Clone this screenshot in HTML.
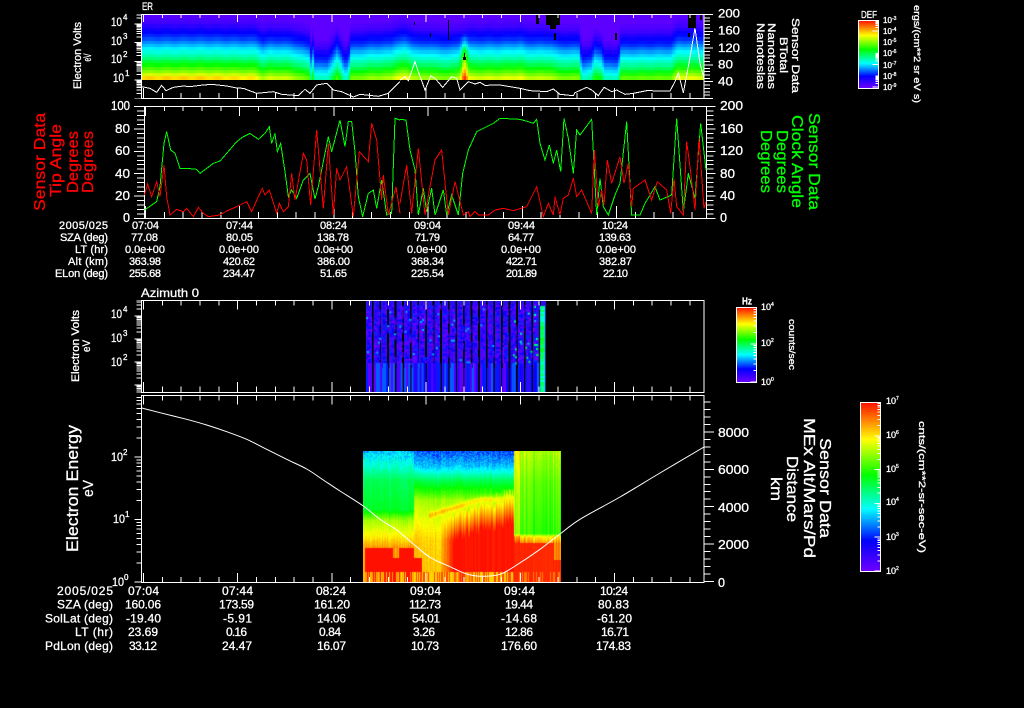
<!DOCTYPE html>
<html lang="en">
<head>
<meta charset="utf-8">
<title>Mars Express sensor data plot</title>
<style>
html,body{margin:0;padding:0;background:#000;width:1024px;height:708px;overflow:hidden}
#root{position:relative;width:1024px;height:708px;background:#000}
canvas{position:absolute;display:block}
svg{position:absolute;left:0;top:0}
text{font-family:"Liberation Sans",sans-serif;fill:#fff;stroke:#fff;stroke-width:.3}
.t{font-size:11px}
.u{font-size:12px}
.n{font-size:13px}
.s{font-size:8px}
.r text{fill:#ff0000;stroke:#ff0000;font-size:16px}
.g text{fill:#00ff00;stroke:#00ff00;font-size:16px}
.big text{font-size:16px}
.fr{fill:none;stroke:#fff;stroke-width:1;shape-rendering:crispEdges}
.tk line{stroke:#fff;shape-rendering:crispEdges}
.pl{fill:none;stroke-width:3;stroke-linejoin:miter;shape-rendering:crispEdges}
</style>
</head>
<body>
<div id="root">
<canvas id="c1" width="562" height="65" style="left:142px;top:15px;background:linear-gradient(#5800f4 0,#0000ff 25%,#00ffff 53%,#00ff00 77%,#ffff00 95%,#ff9000 100%)"></canvas>
<canvas id="c3" width="180" height="91" style="left:366px;top:301px;background:repeating-linear-gradient(90deg,#2a10e8 0,#2a10e8 5.8px,#000 5.8px,#000 7.6px)"></canvas>
<canvas id="c4" width="198" height="131" style="left:363px;top:451px;background:linear-gradient(#00c0ff 0,#00ff60 25%,#40ff00 45%,#ffff00 65%,#ff8000 75%,#ff1000 100%)"></canvas>

<svg width="1024" height="708" viewBox="0 0 1024 708" xmlns="http://www.w3.org/2000/svg">
<defs>
<linearGradient id="rb" x1="0" y1="0" x2="0" y2="1">
<stop offset="0" stop-color="#ff1000"/><stop offset=".22" stop-color="#ffff00"/><stop offset=".43" stop-color="#00ff00"/><stop offset=".63" stop-color="#00ffff"/><stop offset=".82" stop-color="#0000ff"/><stop offset="1" stop-color="#7000ff"/>
</linearGradient>
<path id="lg" fill="none" stroke="#fff" vector-effect="non-scaling-stroke" shape-rendering="crispEdges" d="M-7 0H0M-5 -.301H0M-5 -.477H0M-5 -.602H0M-5 -.699H0M-5 -.778H0M-5 -.845H0M-5 -.903H0M-5 -.954H0"/>
<path id="lc" fill="none" stroke="#fff" vector-effect="non-scaling-stroke" shape-rendering="crispEdges" d="M-6 0H0M-3 -.301H0M-3 -.477H0M-3 -.602H0M-3 -.699H0M-3 -.778H0M-3 -.845H0M-3 -.903H0M-3 -.954H0"/>
<clipPath id="k1"><rect x="130" y="14" width="20" height="85"/></clipPath>
<clipPath id="k3"><rect x="130" y="300" width="20" height="93"/></clipPath>
<clipPath id="k4"><rect x="130" y="395" width="20" height="188"/></clipPath>
<clipPath id="b1"><rect x="858" y="20" width="21" height="69"/></clipPath>
<clipPath id="b2"><rect x="736" y="307" width="21" height="76"/></clipPath>
<clipPath id="b3"><rect x="860" y="402" width="21" height="170"/></clipPath>
</defs>

<!-- black gaps in top spectrogram -->
<g fill="#000" shape-rendering="crispEdges">
<rect x="536" y="15" width="3" height="9"/><rect x="546" y="15" width="14" height="10"/><rect x="550" y="25" width="6" height="4"/><rect x="554" y="33" width="2" height="7"/><rect x="615" y="33" width="2" height="7"/><rect x="688" y="15" width="8" height="13"/><rect x="688" y="33" width="2" height="4"/><rect x="700" y="15" width="2" height="5"/><rect x="414" y="22" width="1" height="3"/><rect x="448" y="20" width="1" height="20"/><rect x="430" y="33" width="1" height="4"/><rect x="463" y="57" width="3" height="3"/><rect x="464" y="53" width="1" height="4"/>
</g>

<!-- frames -->
<rect class="fr" x="141.5" y="14.5" width="562.5" height="84"/>
<rect class="fr" x="144.5" y="106.5" width="562" height="112"/>
<rect class="fr" x="141.5" y="300.5" width="562.5" height="92"/>
<rect class="fr" x="141.5" y="395.5" width="562.5" height="187"/>

<!-- time ticks -->
<g class="tk">
<line x1="143" x2="704" y1="16" y2="16" stroke-width="4" stroke-dasharray="1 17.84"/>
<line x1="143" x2="704" y1="18" y2="18" stroke-width="8" stroke-dasharray="1 93.2"/>
<line x1="143" x2="704" y1="95.5" y2="95.5" stroke-width="5" stroke-dasharray="1 17.84"/>
<line x1="143" x2="704" y1="93" y2="93" stroke-width="10" stroke-dasharray="1 93.2"/>
<line x1="145" x2="706" y1="108.5" y2="108.5" stroke-width="5" stroke-dasharray="1 17.84"/>
<line x1="145" x2="706" y1="111" y2="111" stroke-width="10" stroke-dasharray="1 93.2"/>
<line x1="145" x2="706" y1="215" y2="215" stroke-width="6" stroke-dasharray="1 17.84"/>
<line x1="145" x2="706" y1="212" y2="212" stroke-width="12" stroke-dasharray="1 93.2"/>
<line x1="143" x2="704" y1="303" y2="303" stroke-width="5" stroke-dasharray="1 17.84"/>
<line x1="143" x2="704" y1="305" y2="305" stroke-width="9" stroke-dasharray="1 93.2"/>
<line x1="143" x2="704" y1="389.5" y2="389.5" stroke-width="6" stroke-dasharray="1 17.84"/>
<line x1="143" x2="704" y1="387" y2="387" stroke-width="10" stroke-dasharray="1 93.2"/>
<line x1="143" x2="704" y1="398" y2="398" stroke-width="5" stroke-dasharray="1 17.84"/>
<line x1="143" x2="704" y1="400" y2="400" stroke-width="9" stroke-dasharray="1 93.2"/>
<line x1="143" x2="704" y1="579.5" y2="579.5" stroke-width="5" stroke-dasharray="1 17.84"/>
<line x1="143" x2="704" y1="577.5" y2="577.5" stroke-width="9" stroke-dasharray="1 93.2"/>
<!-- value ticks -->
<line x1="140.5" x2="140.5" y1="106" y2="219" stroke-width="7" stroke-dasharray="1 3.48"/>
<line x1="139" x2="139" y1="106" y2="219" stroke-width="10" stroke-dasharray="1 21.4"/>
<line x1="707" x2="707" y1="14" y2="99" stroke-width="6" stroke-dasharray="1 2.36"/>
<line x1="708.5" x2="708.5" y1="14" y2="99" stroke-width="9" stroke-dasharray="1 15.8"/>
<line x1="710" x2="710" y1="106" y2="219" stroke-width="7" stroke-dasharray="1 3.48"/>
<line x1="711" x2="711" y1="106" y2="219" stroke-width="9" stroke-dasharray="1 21.4"/>
<line x1="707.5" x2="707.5" y1="582" y2="395" stroke-width="6" stroke-dasharray="1 6.48"/>
<line x1="709" x2="709" y1="582" y2="395" stroke-width="10" stroke-dasharray="1 36.4"/>
</g>

<!-- log ticks -->
<g clip-path="url(#k1)">
<use href="#lg" transform="translate(141.5,99) scale(1,18.8)"/><use href="#lg" transform="translate(141.5,80.2) scale(1,18.8)"/><use href="#lg" transform="translate(141.5,61.4) scale(1,18.8)"/><use href="#lg" transform="translate(141.5,42.6) scale(1,18.8)"/><use href="#lg" transform="translate(141.5,23.8) scale(1,18.8)"/>
</g>
<g clip-path="url(#k3)">
<use href="#lg" transform="translate(141.5,408) scale(1,23)"/><use href="#lg" transform="translate(141.5,385) scale(1,23)"/><use href="#lg" transform="translate(141.5,362) scale(1,23)"/><use href="#lg" transform="translate(141.5,339) scale(1,23)"/><use href="#lg" transform="translate(141.5,316) scale(1,23)"/>
</g>
<g clip-path="url(#k4)">
<use href="#lg" transform="translate(141.5,582) scale(1,62.5)"/><use href="#lg" transform="translate(141.5,519.5) scale(1,62.5)"/><use href="#lg" transform="translate(141.5,457) scale(1,62.5)"/>
</g>

<!-- data lines -->
<g transform="translate(60,0) scale(.33333)" class="pl" stroke="#fff"><polyline points="245,260 270,265 290,277 305,256 318,272 340,262 370,258 390,260 420,256 455,253 500,258 530,264 550,265 590,280 610,278 640,275 665,283 715,287 735,268 750,280 770,255 800,250 820,270 845,275 880,291 900,283 955,289 985,280 1020,245"/></g>
<g transform="translate(400,0) scale(.33333)" class="pl" stroke="#fff"><polyline points="0,240 15,230 25,242 45,185 55,215 75,270 92,228 105,235 128,262 155,230 170,235 180,270 205,245 225,252 240,247 255,256 300,255 360,265 390,272 440,275 460,267 480,283 520,287 525,278 560,262 575,270 595,287 612,262 635,275 650,270 675,283 700,280 740,272 810,273 825,245 835,218 850,278 865,200 885,85 900,190 912,235"/></g>

<g transform="translate(20,100) scale(.33333)" class="pl">
<polyline stroke="#00ff00" points="373,330 385,322 410,305 420,260 432,130 440,95 452,150 465,160 480,205 500,205 530,208 540,220 560,205 580,190 600,183 620,160 650,125 670,110 690,100 715,118 735,100 748,80 755,130 765,100 772,155 782,130 795,215 805,290 815,270 830,295 850,240 870,220 885,297 895,260 925,110 935,155 960,60 975,140 985,65 995,65 1005,155 1015,290 1028,350 1045,280 1060,270 1070,325 1085,240 1100,345 1115,340 1125,55 1140,60"/>
<polyline stroke="#ff0000" points="373,285 383,252 395,290 410,245 420,290 432,195 440,290 450,345 470,328 490,335 500,325 520,350 535,322 550,340 565,350 600,345 620,333 650,320 680,305 695,335 715,290 727,265 735,285 748,270 770,340 778,310 790,335 805,320 815,220 825,300 850,160 860,180 872,315 890,90 910,325 925,130 940,345 950,205 960,240 980,200 1000,350 1018,155 1045,185 1055,70 1070,120 1085,300 1090,225 1105,345 1128,260 1140,340"/>
</g>
<g transform="translate(400,100) scale(.33333)" class="pl">
<polyline stroke="#00ff00" points="0,58 18,60 30,150 45,210 55,345 70,265 80,335 95,265 105,345 130,270 140,345 155,285 175,345 188,220 205,150 230,95 250,85 280,70 300,55 360,58 385,65 400,70 410,58 420,130 435,180 448,135 460,190 470,150 482,215 492,55 505,115 520,220 530,90 540,105 575,58 590,345 600,235 610,320 625,345 645,285 660,250 680,65 695,345 720,345 735,310 765,260 780,300 815,285 830,55 850,335 865,220 885,295 902,70 918,210"/>
<polyline stroke="#ff0000" points="0,310 20,195 35,340 55,145 75,345 90,260 105,180 125,150 145,345 165,245 190,345 205,335 210,350 225,335 235,345 265,345 285,330 310,325 340,332 380,320 410,260 430,350 445,310 460,345 465,290 480,345 490,295 505,285 520,235 530,290 545,270 575,340 583,150 595,320 605,270 612,315 622,180 635,250 660,170 672,250 685,190 695,320 700,265 735,240 755,300 772,245 800,270 812,340 822,235 830,320 850,345 860,125 870,200 885,330 897,115 912,325 918,305"/>
</g>

<!-- altitude line -->
<path id="alt" fill="none" stroke="#fff" d="M141.7,408 L160,412.7 186.7,419.3 206.7,425 226.7,431.7 246.7,439.3 266.7,449.3 286.7,459.3 306.7,469 323.3,480 340,491 363.3,506 380,519.3 396.7,530 413.3,544 430,557.3 450,566.7 466.7,574 481.7,576.3 500,574.3 516.7,565 540,549.3 560,534 580,519.3 620,497 660,473 704,447"/>

<!-- color bars -->
<rect x="858.5" y="20.5" width="20" height="68" fill="url(#rb)" stroke="#fff" shape-rendering="crispEdges"/>
<rect x="736.5" y="307.5" width="20" height="75" fill="url(#rb)" stroke="#fff" shape-rendering="crispEdges"/>
<rect x="860.5" y="402.5" width="20" height="169" fill="url(#rb)" stroke="#fff" shape-rendering="crispEdges"/>
<g clip-path="url(#b1)">
<use href="#lc" transform="translate(878.5,87) scale(1,11.3)"/><use href="#lc" transform="translate(878.5,64.4) scale(1,11.3)"/><use href="#lc" transform="translate(878.5,31) scale(1,11.3)"/>
</g>
<g clip-path="url(#b2)">
<use href="#lc" transform="translate(756.5,382) scale(1,38)"/><use href="#lc" transform="translate(756.5,344) scale(1,38)"/>
</g>
<g clip-path="url(#b3)">
<use href="#lc" transform="translate(880.5,571) scale(1,33.8)"/><use href="#lc" transform="translate(880.5,537.2) scale(1,33.8)"/><use href="#lc" transform="translate(880.5,503.4) scale(1,33.8)"/><use href="#lc" transform="translate(880.5,469.6) scale(1,33.8)"/><use href="#lc" transform="translate(880.5,435.8) scale(1,33.8)"/>
</g>

<!-- panel 1 labels -->
<text class="t" x="142" y="10" textLength="11" lengthAdjust="spacingAndGlyphs">ER</text>
<text class="t" transform="translate(81,55.5) rotate(-90)" text-anchor="middle" textLength="67" lengthAdjust="spacingAndGlyphs">Electron Volts</text>
<text class="t" transform="translate(91,57.5) rotate(-90)" text-anchor="middle" textLength="8" lengthAdjust="spacingAndGlyphs">eV</text>
<g class="u">
<text x="111" y="26" textLength="11" lengthAdjust="spacingAndGlyphs">10</text><text class="s" x="123" y="20">4</text>
<text x="111" y="45" textLength="11" lengthAdjust="spacingAndGlyphs">10</text><text class="s" x="123" y="39">3</text>
<text x="111" y="63" textLength="11" lengthAdjust="spacingAndGlyphs">10</text><text class="s" x="123" y="57">2</text>
<text x="113" y="82" textLength="11" lengthAdjust="spacingAndGlyphs">10</text><text class="s" x="125" y="76">1</text>
</g>
<g class="u">
<text x="718" y="17.5" textLength="22" lengthAdjust="spacingAndGlyphs">200</text>
<text x="718" y="34.5" textLength="22" lengthAdjust="spacingAndGlyphs">160</text>
<text x="718" y="52" textLength="22" lengthAdjust="spacingAndGlyphs">120</text>
<text x="718" y="68.5" textLength="15" lengthAdjust="spacingAndGlyphs">80</text>
<text x="718" y="85.5" textLength="15" lengthAdjust="spacingAndGlyphs">40</text>
</g>
<g class="t">
<text transform="translate(792,55.5) rotate(90)" text-anchor="middle" textLength="75" lengthAdjust="spacingAndGlyphs">Sensor Data</text>
<text transform="translate(780,55) rotate(90)" text-anchor="middle" textLength="36" lengthAdjust="spacingAndGlyphs">BTotal</text>
<text transform="translate(768,56) rotate(90)" text-anchor="middle" textLength="66" lengthAdjust="spacingAndGlyphs">Nanoteslas</text>
<text transform="translate(757,56) rotate(90)" text-anchor="middle" textLength="66" lengthAdjust="spacingAndGlyphs">Nanoteslas</text>
</g>
<text class="t" x="861" y="18" textLength="16" lengthAdjust="spacingAndGlyphs" style="font-size:10px">DEF</text>
<g style="font-size:8px">
<text x="883" y="23">10</text><text x="892" y="20" style="font-size:5px">-3</text>
<text x="883" y="34">10</text><text x="892" y="31" style="font-size:5px">-4</text>
<text x="883" y="45">10</text><text x="892" y="42" style="font-size:5px">-5</text>
<text x="883" y="56">10</text><text x="892" y="53" style="font-size:5px">-6</text>
<text x="883" y="68">10</text><text x="892" y="65" style="font-size:5px">-7</text>
<text x="883" y="79">10</text><text x="892" y="76" style="font-size:5px">-8</text>
<text x="883" y="90">10</text><text x="892" y="87" style="font-size:5px">-9</text>
</g>
<text transform="translate(914,54) rotate(90)" text-anchor="middle" textLength="98" lengthAdjust="spacingAndGlyphs" style="font-size:9px">ergs/(cm**2 sr eV s)</text>

<!-- panel 2 labels -->
<g class="n">
<text x="111" y="110" textLength="19" lengthAdjust="spacingAndGlyphs">100</text>
<text x="115" y="133" textLength="15" lengthAdjust="spacingAndGlyphs">80</text>
<text x="115" y="155" textLength="15" lengthAdjust="spacingAndGlyphs">60</text>
<text x="115" y="178" textLength="15" lengthAdjust="spacingAndGlyphs">40</text>
<text x="115" y="200" textLength="15" lengthAdjust="spacingAndGlyphs">20</text>
<text x="123" y="222" textLength="7" lengthAdjust="spacingAndGlyphs">0</text>
<text x="720" y="110" textLength="23" lengthAdjust="spacingAndGlyphs">200</text>
<text x="720" y="133" textLength="23" lengthAdjust="spacingAndGlyphs">160</text>
<text x="720" y="155" textLength="23" lengthAdjust="spacingAndGlyphs">120</text>
<text x="720" y="178" textLength="15" lengthAdjust="spacingAndGlyphs">80</text>
<text x="720" y="200" textLength="15" lengthAdjust="spacingAndGlyphs">40</text>
<text x="720" y="222" textLength="7" lengthAdjust="spacingAndGlyphs">0</text>
</g>
<g class="r">
<text transform="translate(45,162) rotate(-90)" text-anchor="middle" textLength="98" lengthAdjust="spacingAndGlyphs">Sensor Data</text>
<text transform="translate(61,160.5) rotate(-90)" text-anchor="middle" textLength="73" lengthAdjust="spacingAndGlyphs">Tip Angle</text>
<text transform="translate(78,162) rotate(-90)" text-anchor="middle" textLength="62" lengthAdjust="spacingAndGlyphs">Degrees</text>
<text transform="translate(93,162) rotate(-90)" text-anchor="middle" textLength="62" lengthAdjust="spacingAndGlyphs">Degrees</text>
</g>
<g class="g">
<text transform="translate(809,161.5) rotate(90)" text-anchor="middle" textLength="97" lengthAdjust="spacingAndGlyphs">Sensor Data</text>
<text transform="translate(792,161.5) rotate(90)" text-anchor="middle" textLength="93" lengthAdjust="spacingAndGlyphs">Clock Angle</text>
<text transform="translate(777,161.5) rotate(90)" text-anchor="middle" textLength="63" lengthAdjust="spacingAndGlyphs">Degrees</text>
<text transform="translate(761,161.5) rotate(90)" text-anchor="middle" textLength="63" lengthAdjust="spacingAndGlyphs">Degrees</text>
</g>

<!-- table 1 -->
<g class="t">
<text x="59" y="229" textLength="49">2005/025</text>
<text x="60" y="241" textLength="48">SZA (deg)</text>
<text x="75" y="253" textLength="33">LT (hr)</text>
<text x="68" y="265" textLength="40">Alt (km)</text>
<text x="55" y="277" textLength="53">ELon (deg)</text>
<text x="132" y="229" textLength="27">07:04</text><text x="131" y="241" textLength="27">77.08</text><text x="125" y="253" textLength="40">0.0e+00</text><text x="129" y="265" textLength="32">363.98</text><text x="129" y="277" textLength="32">255.68</text>
<text x="226" y="229" textLength="27">07:44</text><text x="226" y="241" textLength="27">80.05</text><text x="219" y="253" textLength="40">0.0e+00</text><text x="223" y="265" textLength="32">420.62</text><text x="223" y="277" textLength="32">234.47</text>
<text x="320" y="229" textLength="27">08:24</text><text x="317" y="241" textLength="32">138.78</text><text x="314" y="253" textLength="39">0.0e+00</text><text x="317" y="265" textLength="33">386.00</text><text x="320" y="277" textLength="27">51.65</text>
<text x="414" y="229" textLength="27">09:04</text><text x="415" y="241" textLength="25">71.79</text><text x="407" y="253" textLength="40">0.0e+00</text><text x="411" y="265" textLength="33">368.34</text><text x="411" y="277" textLength="33">225.54</text>
<text x="508" y="229" textLength="27">09:44</text><text x="508" y="241" textLength="26">64.77</text><text x="501" y="253" textLength="40">0.0e+00</text><text x="506" y="265" textLength="31">422.71</text><text x="506" y="277" textLength="31">201.89</text>
<text x="602" y="229" textLength="26">10:24</text><text x="599" y="241" textLength="32">139.63</text><text x="596" y="253" textLength="40">0.0e+00</text><text x="599" y="265" textLength="33">382.87</text><text x="603" y="277" textLength="25">22.10</text>
</g>

<!-- panel 3 labels -->
<text class="u" x="141" y="297" textLength="58" lengthAdjust="spacingAndGlyphs">Azimuth 0</text>
<text class="t" transform="translate(79,346) rotate(-90)" text-anchor="middle" textLength="72" lengthAdjust="spacingAndGlyphs">Electron Volts</text>
<text class="t" transform="translate(90,346) rotate(-90)" text-anchor="middle" textLength="12" lengthAdjust="spacingAndGlyphs">eV</text>
<g class="u">
<text x="111" y="318" textLength="11" lengthAdjust="spacingAndGlyphs">10</text><text class="s" x="123" y="312">4</text>
<text x="111" y="342" textLength="11" lengthAdjust="spacingAndGlyphs">10</text><text class="s" x="123" y="336">3</text>
<text x="111" y="366" textLength="11" lengthAdjust="spacingAndGlyphs">10</text><text class="s" x="123" y="360">2</text>
</g>
<text x="742" y="304.5" textLength="10" lengthAdjust="spacingAndGlyphs" style="font-size:10px;font-weight:bold">Hz</text>
<g style="font-size:9px">
<text x="761" y="310">10</text><text x="771" y="306" style="font-size:5px">4</text>
<text x="761" y="346">10</text><text x="771" y="342" style="font-size:5px">2</text>
<text x="761" y="385">10</text><text x="771" y="381" style="font-size:5px">0</text>
</g>
<text transform="translate(789,344.5) rotate(90)" text-anchor="middle" textLength="51" lengthAdjust="spacingAndGlyphs" style="font-size:9px">counts/sec</text>

<!-- panel 4 labels -->
<g style="font-size:17px">
<text transform="translate(78,488.5) rotate(-90)" text-anchor="middle" textLength="127" lengthAdjust="spacingAndGlyphs">Electron Energy</text>
<text transform="translate(93,488.5) rotate(-90)" text-anchor="middle" textLength="17" lengthAdjust="spacingAndGlyphs" style="font-size:15px">eV</text>
</g>
<g class="u">
<text x="111" y="461" textLength="12" lengthAdjust="spacingAndGlyphs">10</text><text class="s" x="123" y="455">2</text>
<text x="113" y="523" textLength="12" lengthAdjust="spacingAndGlyphs">10</text><text class="s" x="125" y="517">1</text>
<text x="112" y="586" textLength="12" lengthAdjust="spacingAndGlyphs">10</text><text class="s" x="124" y="580">0</text>
</g>
<g class="n">
<text x="718" y="437" textLength="31" lengthAdjust="spacingAndGlyphs">8000</text>
<text x="718" y="474" textLength="31" lengthAdjust="spacingAndGlyphs">6000</text>
<text x="718" y="512" textLength="31" lengthAdjust="spacingAndGlyphs">4000</text>
<text x="718" y="549" textLength="31" lengthAdjust="spacingAndGlyphs">2000</text>
<text x="718" y="587" textLength="7" lengthAdjust="spacingAndGlyphs">0</text>
</g>
<g class="big">
<text transform="translate(820,488) rotate(90)" text-anchor="middle" textLength="100" lengthAdjust="spacingAndGlyphs">Sensor Data</text>
<text transform="translate(804,488) rotate(90)" text-anchor="middle" textLength="140" lengthAdjust="spacingAndGlyphs">MEx Alt/Mars/Pd</text>
<text transform="translate(787,489) rotate(90)" text-anchor="middle" textLength="66" lengthAdjust="spacingAndGlyphs">Distance</text>
<text transform="translate(771,489) rotate(90)" text-anchor="middle" textLength="24" lengthAdjust="spacingAndGlyphs">km</text>
</g>
<g style="font-size:9px">
<text x="886" y="404">10</text><text x="896" y="400" style="font-size:5px">7</text>
<text x="886" y="438">10</text><text x="896" y="434" style="font-size:5px">6</text>
<text x="886" y="472">10</text><text x="896" y="468" style="font-size:5px">5</text>
<text x="886" y="505">10</text><text x="896" y="501" style="font-size:5px">4</text>
<text x="886" y="540">10</text><text x="896" y="536" style="font-size:5px">3</text>
<text x="886" y="574">10</text><text x="896" y="570" style="font-size:5px">2</text>
</g>
<text transform="translate(919,487) rotate(90)" text-anchor="middle" textLength="132" lengthAdjust="spacingAndGlyphs" style="font-size:9px">cnts/(cm**2-sr-sec-eV)</text>

<!-- table 2 -->
<g class="u">
<text x="57" y="595" textLength="56">2005/025</text>
<text x="57" y="608.5" textLength="56">SZA (deg)</text>
<text x="45" y="622.5" textLength="68">SolLat (deg)</text>
<text x="75" y="636" textLength="38">LT (hr)</text>
<text x="45" y="650" textLength="68">PdLon (deg)</text>
<text x="128" y="595" textLength="31">07:04</text><text x="125" y="608.5" textLength="36">160.06</text><text x="126" y="622.5" textLength="35">-19.40</text><text x="128" y="636" textLength="30">23.69</text><text x="129" y="650" textLength="28">33.12</text>
<text x="222" y="595" textLength="31">07:44</text><text x="219" y="608.5" textLength="35">173.59</text><text x="223" y="622.5" textLength="29">-5.91</text><text x="226" y="636" textLength="21">0.16</text><text x="222" y="650" textLength="30">24.47</text>
<text x="316" y="595" textLength="30">08:24</text><text x="314" y="608.5" textLength="36">161.20</text><text x="317" y="622.5" textLength="29">14.06</text><text x="319" y="636" textLength="22">0.84</text><text x="317" y="650" textLength="29">16.07</text>
<text x="410" y="595" textLength="31">09:04</text><text x="409" y="608.5" textLength="32">112.73</text><text x="412" y="622.5" textLength="28">54.01</text><text x="413" y="636" textLength="22">3.26</text><text x="411" y="650" textLength="28">10.73</text>
<text x="504" y="595" textLength="31">09:44</text><text x="505" y="608.5" textLength="28">19.44</text><text x="501" y="622.5" textLength="36">-14.68</text><text x="505" y="636" textLength="28">12.86</text><text x="501" y="650" textLength="36">176.60</text>
<text x="600" y="595" textLength="28">10:24</text><text x="598" y="608.5" textLength="31">80.83</text><text x="597" y="622.5" textLength="35">-61.20</text><text x="601" y="636" textLength="28">16.71</text><text x="596" y="650" textLength="35">174.83</text>
</g>
</svg>
</div>

<script>
(function(){
var seed=12345;function R(){seed=(seed*1664525+1013904223)>>>0;return seed/4294967296;}
var S=[[0,[112,0,255]],[.18,[0,0,255]],[.37,[0,255,255]],[.57,[0,255,0]],[.78,[255,255,0]],[1,[255,16,0]]];
function col(v){v=Math.max(0,Math.min(1,v));for(var i=1;i<S.length;i++){if(v<=S[i][0]){var a=S[i-1],b=S[i],t=(v-a[0])/(b[0]-a[0]);
return 'rgb('+Math.round(a[1][0]+(b[1][0]-a[1][0])*t)+','+Math.round(a[1][1]+(b[1][1]-a[1][1])*t)+','+Math.round(a[1][2]+(b[1][2]-a[1][2])*t)+')';}}return 'rgb(255,16,0)';}
function ip(p,x){if(x<=p[0][0])return p[0][1];for(var i=1;i<p.length;i++){if(x<=p[i][0]){var t=(x-p[i-1][0])/(p[i][0]-p[i-1][0]);return p[i-1][1]+(p[i][1]-p[i-1][1])*t;}}return p[p.length-1][1];}
function Z(a,b,t){return Math.max(a,Math.min(b,t));}

/* smooth altitude curve (Catmull-Rom through the traced points) */
(function(){
 var e=document.getElementById('alt');
 var nums=e.getAttribute('d').replace(/[ML]/g,' ').trim().split(/[\s,]+/).map(Number),P=[];
 for(var i=0;i<nums.length;i+=2)P.push([nums[i],nums[i+1]]);
 var out='M'+P[0][0]+' '+P[0][1];
 for(var i=0;i<P.length-1;i++){
  var p0=P[Math.max(0,i-1)],p1=P[i],p2=P[i+1],p3=P[Math.min(P.length-1,i+2)];
  out+=' C'+(p1[0]+(p2[0]-p0[0])/6).toFixed(1)+' '+(p1[1]+(p2[1]-p0[1])/6).toFixed(1)+' '+(p2[0]-(p3[0]-p1[0])/6).toFixed(1)+' '+(p2[1]-(p3[1]-p1[1])/6).toFixed(1)+' '+p2[0]+' '+p2[1];
 }
 e.setAttribute('d',out);
})();

/* Panel 1 */
var c=document.getElementById('c1').getContext('2d');
var prof=[[15,.03],[24,.08],[30,.16],[38,.22],[44,.3],[50,.37],[58,.46],[65,.57],[72,.68],[77,.78],[80,.86]];
var sh=[[142,0],[200,0],[255,1],[262,5],[270,3],[290,4],[300,7],[308,9],[310,20],[312,12],[314,24],[326,24],[331,18],[336,10],[340,16],[343,24],[347,24],[350,8],[370,6],[390,5],[395,2],[404,1],[412,4],[420,6],[430,5],[440,7],[455,6],[470,3],[500,3],[520,2],[525,4],[550,4],[558,7],[578,7],[581,24],[590,22],[594,12],[600,14],[604,24],[617,24],[620,9],[670,8],[677,2],[703,3]];
var rows=20,rh=65/rows;
for(var x=142;x<704;x+=2){var s=ip(sh,x)+Math.sin(x*.37)*.4;
 for(var r=0;r<rows;r++){var y=15+r*rh+rh/2;var v=ip(prof,y-s);
  var d=(x-463.5)/3.2;v+=.26*Z(0,1,(y-33)/22)*Math.exp(-d*d);
  c.fillStyle=col(v);c.fillRect(x-142,Math.floor(r*rh),2,Math.ceil(rh)+1);}}

/* Panel 3 */
c=document.getElementById('c3').getContext('2d');
var bars=[48,72,96,117,140,163,185,209,231,254,277,300,322,343,366,390,411,434,456,479,503,526,549];
var W=[17,20,16,18,17,17,20,16,19,16,18,16,16,19,17,15,17,16,17,18,17,17,14];
for(var b=0;b<bars.length;b++){
 var x0=bars[b]/3+350-366,w=W[b]/3;
 var top=2+R()*3;
 for(var yy=top;yy<62;yy+=2){
  if(Math.floor(yy)%8<2){var off=R()*1.5,wid=w-1-R()*1.5;}
  for(var xx=off;xx<off+wid;xx+=2){
   if(R()<.05)continue;
   var vv=[0,.03,.06,.1,.14,.18,.21][Math.floor(R()*7)];
   if(R()<.025)vv=.32;
   if(b>=19&&R()<.1)vv=.42+.1*R();
   c.fillStyle=col(vv);c.fillRect(x0+xx,yy,2,2);
  }
 }
 for(var xx=0;xx<w;xx+=2){
  var lv=[.05,.12,.16,.2,.25,.02][Math.floor(R()*6)];
  c.fillStyle=col(lv);
  c.fillRect(x0+xx+(xx===0?1:0),62,xx===0?1:2,5);
  c.fillRect(x0+xx,67,2,24);
 }
}
for(var yy=1;yy<91;yy+=2){c.fillStyle=col(.4+.1*R()+(yy>20&&yy<55?.06:0));c.fillRect(350+570/3-366,yy+(yy<6?4:0),5,2);}

/* Panel 4 */
c=document.getElementById('c4').getContext('2d');
var L=[[33,.33],[80,.41],[120,.5],[210,.54],[240,.7],[290,.79],[325,.88],[425,.9]];
var Mu=[[33,.24],[80,.33],[120,.5],[160,.62],[180,.7],[250,.77],[300,.82],[425,.84]];
var Rr=[[33,.72],[130,.66],[280,.62],[290,.8],[310,.9],[325,.96],[425,.98]];
for(var px=0;px<198;px++){
 var Xz=(px+363-340)*3;var st=(R()-.5)*.08,st2=R();
 var edge=(R()-.5)*30;
 for(var py=0;py<131;py++){
  var Yz=(py+451-440)*3+1,val;
  var topN=Yz<100?(R()-.5)*.14*(1-(Yz-33)/90):(R()-.5)*.03;
  if(Xz<220){val=ip(L,Yz)+st*.6+topN;
    if(Yz>=325&&Yz<395){val=(Xz<75||(Yz<355&&Xz>=158&&Xz<175))?.86+st:1;}
    if(Yz>=395){val=st2<.45?1:.85+st;}
  }else if(Xz<520){val=ip(Mu,Yz)+st*.5+topN;
    var Ya=Xz<420?225-(Xz-270)*.31:178;var dd=(Yz-Ya)/9;
    if(Xz>=265)val+=.1*Math.exp(-dd*dd);
    var wt=Z(0,1,(Xz-300)/40);
    if(wt>0){var Yr=300-(Xz-330)*.28+edge,q=Yz-Yr;
      if(q>-90){var tv=.72+Z(0,1,(q+90)/90)*.28+st*.4;val=Math.max(val,val+(tv-val)*wt);}
    }
    if(Xz<245&&Yz>=355&&Yz<395)val=1;
    if(Yz>=395){val=Xz>=330&&Xz<400?.78+st2*.22:(st2<.55?.82:.95);}
  }else{val=ip(Rr,Yz)+st*1.4+(Xz<540?.07:0)+topN*.4;
    if(Yz>=310){val=(Xz>640&&Yz<360)?.9+st:.98+st*.2;}
    if(Yz>=395&&st2<.3)val=.9;
  }
  c.fillStyle=col(val);c.fillRect(px,py,1,1);
 }
}
})();
</script>
</body>
</html>
